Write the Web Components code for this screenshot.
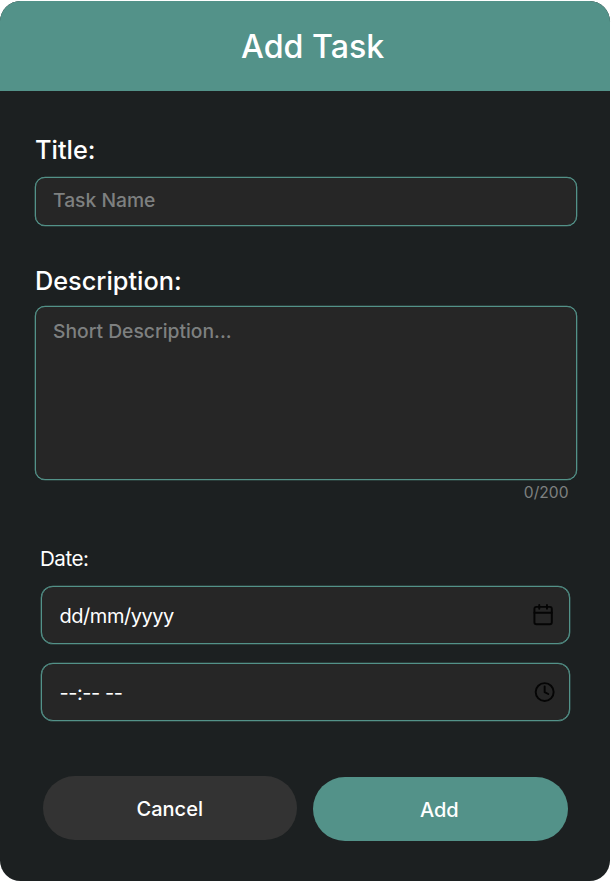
<!DOCTYPE html>
<html lang="en"><head><meta charset="utf-8"><title>Add Task</title>
<style>
html,body{margin:0;background:#fff}
body{width:611px;height:882px;overflow:hidden;font-family:Inter,"Liberation Sans",sans-serif;color:#fff}
</style></head><body>
<task-dialog heading="Add Task">
  <task-field class="title" label="Title:" placeholder="Task Name"></task-field>
  <task-field class="desc" label="Description:" placeholder="Short Description..." counter="0/200"></task-field>
  <date-group label="Date:">
    <picker-field value="dd/mm/yyyy" icon="calendar"></picker-field>
    <picker-field class="time" value="--:-- --" icon="clock"></picker-field>
  </date-group>
  <pill-button slot="actions">Cancel</pill-button>
  <pill-button slot="actions" primary>Add</pill-button>
</task-dialog>
<script>
const define = (name, render) => customElements.define(name, class extends HTMLElement {
  connectedCallback() {
    if (this.shadowRoot) return;
    this.attachShadow({ mode: 'open' }).innerHTML = render(this);
  }
});

define('task-dialog', el => `<style>
  :host{display:flex;flex-direction:column;box-sizing:border-box;width:610.4px;height:880.6px;margin-top:.7px;background:#1c2021;border-radius:20.5px;overflow:hidden}
  header{height:90.6px;flex:none;background:#539289;display:flex;justify-content:center;box-sizing:border-box;padding:26px 0 0 15px;font-size:32.2px;line-height:40px;font-weight:500}
  main{display:flex;flex-direction:column}
  footer{display:flex;gap:16px;padding:55px 0 0 42.5px;align-items:flex-start}
</style><header><span>${el.getAttribute('heading')}</span></header><main><slot></slot></main><footer><slot name="actions"></slot></footer>`);

define('task-field', el => `<style>
  :host{display:flex;flex-direction:column;padding:42.7px 33.4px 0 35px}
  :host(.desc){padding-top:39px}
  label{font-size:25.3px;font-weight:500;line-height:32px;height:43px;white-space:nowrap}
  :host(.desc) label{height:41px}
  .box{box-sizing:border-box;height:49px;border:1px solid #539289;box-shadow:0 0 0 .3px #539289;border-radius:10px;background:#262626;color:#7e8080;font-size:19.3px;font-weight:500;line-height:24px;padding:10px 17px}
  :host(.desc) .box{height:174px;padding-top:12px}
  .count{align-self:flex-end;font-size:15.6px;line-height:20px;color:#7e8080;height:20px;margin:3px 8.5px 0 0}
</style><label>${el.getAttribute('label')}</label><div class="box">${el.getAttribute('placeholder')}</div>${el.hasAttribute('counter') ? `<div class="count">${el.getAttribute('counter')}</div>` : ''}`);

define('date-group', el => `<style>
  :host{display:flex;flex-direction:column;padding:43px 40.4px 0 41px}
  label{font-size:20.6px;letter-spacing:-.5px;line-height:26px;height:40px;margin-left:-1px}
  .list{display:flex;flex-direction:column;gap:19px}
</style><label>${el.getAttribute('label')}</label><div class="list"><slot></slot></div>`);

const icons = {
  calendar: '<g transform="translate(-.5 0)"><rect x="3" y="4" width="18" height="18" rx="2"/><path d="M16 2v4M8 2v4M3 10h18"/></g>',
  clock: '<circle cx="13.1" cy="12.5" r="9.3"/><path d="M13.1 6.7v5.9l3.7 1.9"/>'
};
define('picker-field', el => `<style>
  :host{display:flex;justify-content:space-between;align-items:center;box-sizing:border-box;height:58px;border:1px solid #539289;box-shadow:0 0 0 .3px #539289;border-radius:12px;background:#262626;padding:0 14px 0 17.5px;font-size:20px;letter-spacing:-.45px;line-height:24px}
  span{padding-top:2px}
  svg{width:23.2px;height:23.2px;fill:none;stroke:#050505;stroke-width:2;stroke-linecap:round;stroke-linejoin:round}
</style><span>${el.getAttribute('value')}</span><svg viewBox="0 0 24 24">${icons[el.getAttribute('icon')]}</svg>`);

define('pill-button', el => `<style>
  :host{display:flex;align-items:center;justify-content:center;box-sizing:border-box;width:254.5px;height:64px;padding-top:2px;border-radius:32px;background:#333;font-size:20px;font-weight:500;line-height:24px}
  :host([primary]){background:#539289;margin-top:1px;padding:3px 2px 0 0}
</style><slot></slot>`);
</script></body></html>
